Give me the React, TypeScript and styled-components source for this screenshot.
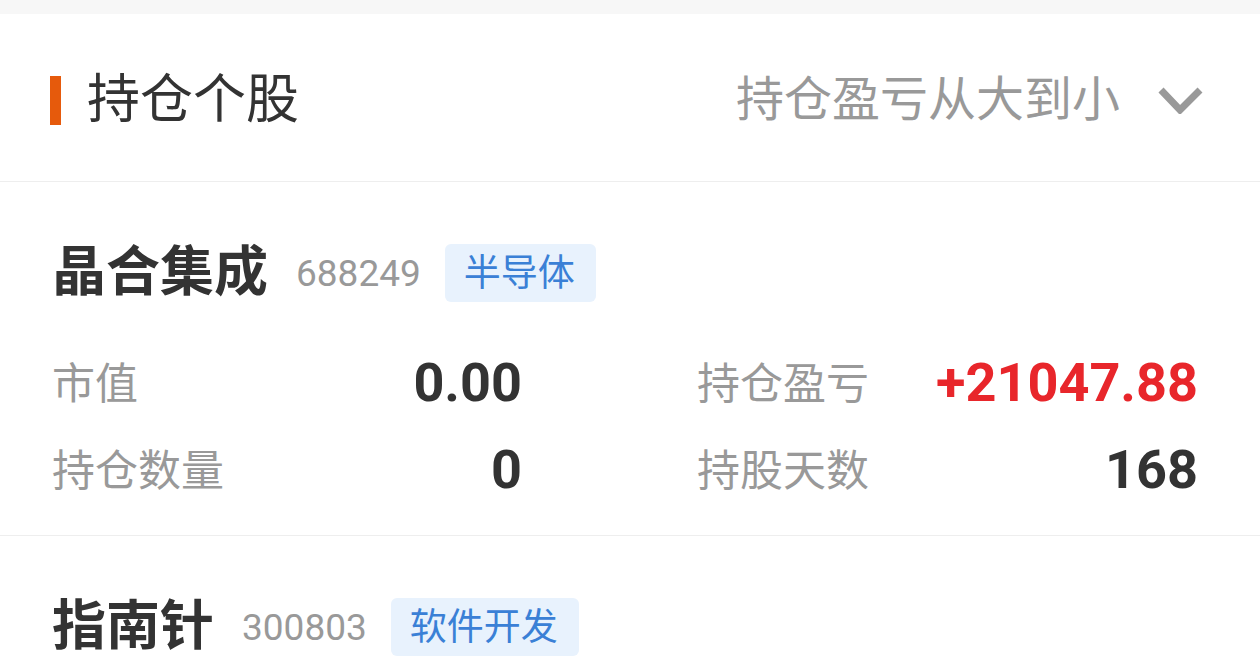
import React from 'react';
import styled, { createGlobalStyle } from 'styled-components';

const GlobalStyle = createGlobalStyle`
  html, body {
    margin: 0;
    padding: 0;
    overflow: hidden;
    background-color: #f7f7f7;
    font-family: Roboto, "Noto Sans CJK SC", "Noto Sans", sans-serif;
  }
`;

const Page = styled.div`
  margin-top: 14px;
  background-color: #ffffff;
  min-height: 100vh;
`;

const Header = styled.div`
  display: flex;
  align-items: center;
  justify-content: space-between;
  height: 168px;
  padding: 5px 56px 0 50px;
  border-bottom: 1px solid #eeeeee;
  box-sizing: border-box;
`;

const TitleWrap = styled.div`
  display: flex;
  align-items: center;
  gap: 26px;
`;

const Accent = styled.span`
  display: block;
  width: 11px;
  height: 49px;
  background-color: #e65a0c;
`;

const Title = styled.h2`
  margin: 0;
  font-size: 53px;
  font-weight: 400;
  color: #333333;
  line-height: 1;
`;

const SortButton = styled.button`
  display: flex;
  align-items: center;
  gap: 38px;
  border: none;
  background: none;
  padding: 0;
  font-family: inherit;
  font-size: 48px;
  line-height: 1;
  color: #999999;
  cursor: pointer;
`;

const Card = styled.div`
  padding: 62px 62px 22px 52px;
  border-bottom: 1px solid #eeeeee;
`;

const NameRow = styled.div`
  display: flex;
  align-items: center;
  height: 58px;
`;

const StockName = styled.span`
  font-size: 54px;
  font-weight: 700;
  line-height: 1;
  color: #333333;
  margin-right: 28px;
`;

const StockCode = styled.span`
  font-size: 37px;
  line-height: 1;
  color: #999999;
  margin-right: 24px;
`;

const Tag = styled.span`
  display: flex;
  align-items: center;
  height: 58px;
  padding: 0 21px 0 19px;
  border-radius: 6px;
  background-color: #e8f2fd;
  color: #3a80d6;
  font-size: 37px;
  line-height: 1;
`;

const Metrics = styled.div`
  display: grid;
  grid-template-columns: 470px 1fr;
  column-gap: 175px;
  margin-top: 37px;
`;

const Metric = styled.div`
  display: flex;
  align-items: center;
  justify-content: space-between;
  height: 87px;
`;

const Label = styled.span`
  font-size: 43px;
  line-height: 1;
  color: #999999;
  padding-top: 4px;
`;

const Value = styled.span<{ $tone?: 'up' | 'down' }>`
  font-size: 54px;
  font-weight: 700;
  line-height: 1;
  color: ${({ $tone }) => ($tone === 'up' ? '#e8262b' : $tone === 'down' ? '#1aa260' : '#333333')};
`;

const Chevron = () => (
  <svg width="46" height="28" viewBox="0 0 46 28" fill="none">
    <polyline points="3,4 22,24 42,4" stroke="#999999" strokeWidth="7" />
  </svg>
);

type Stock = {
  name: string;
  code: string;
  sector: string;
  marketValue: string;
  profit: string;
  quantity: string;
  days: string;
};

const stocks: Stock[] = [
  { name: '晶合集成', code: '688249', sector: '半导体', marketValue: '0.00', profit: '+21047.88', quantity: '0', days: '168' },
  { name: '指南针', code: '300803', sector: '软件开发', marketValue: '0.00', profit: '+8630.20', quantity: '0', days: '95' },
];

const toneOf = (v: string) => (v.startsWith('+') ? 'up' : v.startsWith('-') ? 'down' : undefined);

const App: React.FC = () => {
  return (
    <>
      <GlobalStyle />
      <Page>
        <Header>
          <TitleWrap>
            <Accent />
            <Title>持仓个股</Title>
          </TitleWrap>
          <SortButton>
            持仓盈亏从大到小
            <Chevron />
          </SortButton>
        </Header>

        {stocks.map((s) => (
          <Card key={s.code}>
            <NameRow>
              <StockName>{s.name}</StockName>
              <StockCode>{s.code}</StockCode>
              <Tag>{s.sector}</Tag>
            </NameRow>
            <Metrics>
              <Metric>
                <Label>市值</Label>
                <Value>{s.marketValue}</Value>
              </Metric>
              <Metric>
                <Label>持仓盈亏</Label>
                <Value $tone={toneOf(s.profit)}>{s.profit}</Value>
              </Metric>
              <Metric>
                <Label>持仓数量</Label>
                <Value>{s.quantity}</Value>
              </Metric>
              <Metric>
                <Label>持股天数</Label>
                <Value>{s.days}</Value>
              </Metric>
            </Metrics>
          </Card>
        ))}
      </Page>
    </>
  );
};

export default App;
